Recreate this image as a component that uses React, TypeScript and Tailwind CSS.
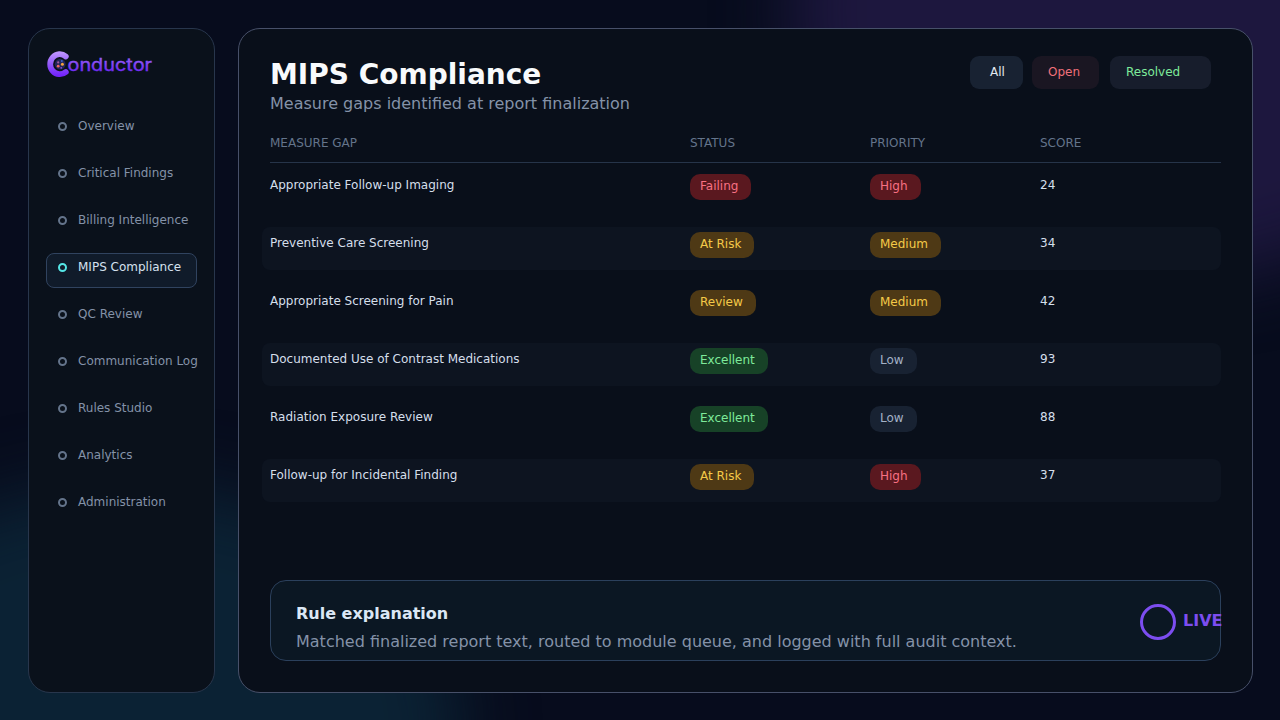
import clsx from "clsx";

interface NavItemProps {
  label: string;
  active?: boolean;
}

const navItems = [
  "Overview",
  "Critical Findings",
  "Billing Intelligence",
  "MIPS Compliance",
  "QC Review",
  "Communication Log",
  "Rules Studio",
  "Analytics",
  "Administration",
];

const rows = [
  { gap: "Appropriate Follow-up Imaging", status: "Failing", priority: "High", score: 24 },
  { gap: "Preventive Care Screening", status: "At Risk", priority: "Medium", score: 34 },
  { gap: "Appropriate Screening for Pain", status: "Review", priority: "Medium", score: 42 },
  { gap: "Documented Use of Contrast Medications", status: "Excellent", priority: "Low", score: 93 },
  { gap: "Radiation Exposure Review", status: "Excellent", priority: "Low", score: 88 },
  { gap: "Follow-up for Incidental Finding", status: "At Risk", priority: "High", score: 37 },
];

const badgeStyles: Record<string, string> = {
  Failing: "w-[61px] bg-[#5a181f] text-[#f87183]",
  High: "w-[51px] bg-[#5a181f] text-[#f87183]",
  "At Risk": "w-[64px] bg-[#4e3915] text-[#f5ca48]",
  Review: "w-[66px] bg-[#4e3915] text-[#f5ca48]",
  Medium: "w-[71px] bg-[#4e3915] text-[#f5ca48]",
  Excellent: "w-[78px] bg-[#174227] text-[#7eea9a]",
  Low: "w-[47px] bg-[#182232] text-[#a3b1c6]",
};

const Logo = () => (
  <svg width="106" height="28" viewBox="0 0 106 28" className="block">
    <defs>
      <linearGradient id="brand" x1="0" y1="0" x2="0" y2="28" gradientUnits="userSpaceOnUse">
        <stop offset="0.1" stopColor="#bd92ff" />
        <stop offset="0.5" stopColor="#9259f8" />
        <stop offset="0.9" stopColor="#7424fb" />
      </linearGradient>
      <linearGradient id="word" x1="0" y1="7" x2="0" y2="21" gradientUnits="userSpaceOnUse">
        <stop offset="0" stopColor="#9a62f8" />
        <stop offset="1" stopColor="#6f2cf0" />
      </linearGradient>
    </defs>
    <path
      d="M18.8 6.4A9.6 10 0 1 0 18.8 22"
      fill="none"
      stroke="url(#brand)"
      strokeWidth="5.8"
      strokeLinecap="round"
    />
    <circle cx="13.2" cy="14.2" r="5.4" fill="#22265a" />
    <circle cx="11.2" cy="12.4" r="1.1" fill="#a25a9a" />
    <circle cx="14.8" cy="11" r="1" fill="#3f62c8" />
    <circle cx="15.4" cy="14.3" r="1.5" fill="#f7a43c" />
    <circle cx="11.2" cy="16.2" r="1.4" fill="#f0655f" />
    <circle cx="14.2" cy="17.8" r="0.9" fill="#8c4ad6" />
    <text
      x="20.5"
      y="20.6"
      textLength="84.5"
      lengthAdjust="spacingAndGlyphs"
      fontFamily="Inter, sans-serif"
      fontSize="17.5"
      fill="url(#word)"
      stroke="url(#word)"
      strokeWidth="0.35"
    >
      onductor
    </text>
  </svg>
);

const NavItem = ({ label, active }: NavItemProps) => (
  <div
    className={clsx(
      "flex h-[35px] w-[151px] items-start gap-[11px] rounded-lg border pt-[5px] pl-[11px] text-xs whitespace-nowrap",
      active ? "border-[#30435f] bg-[#101b2a] text-[#d5e1ef]" : "border-transparent text-[#8492a8]"
    )}
  >
    <span
      className={clsx(
        "mt-[4px] size-[9px] shrink-0 rounded-full border-2",
        active ? "border-[#55e6e6]" : "border-[#64748b]"
      )}
    />
    <span className="leading-4">{label}</span>
  </div>
);

const Badge = ({ label }: { label: string }) => (
  <span className={clsx("block h-[26px] rounded-[10px] pl-[10px] leading-6 whitespace-nowrap", badgeStyles[label])}>
    {label}
  </span>
);

const App = () => {
  return (
    <div className="relative flex h-[720px] w-[1280px] gap-[23px] overflow-hidden bg-[#070c1d] p-7 font-['DejaVu_Sans',sans-serif]">
      {/* background glows */}
      <div className="absolute top-[-260px] left-[790px] h-[540px] w-[720px] rounded-[50%] bg-[#1d173e] blur-[35px]" />
      <div className="absolute top-[486px] left-[-200px] h-[480px] w-[660px] rounded-[50%] bg-[#0b2234] blur-[35px]" />

      <aside className="relative h-[665px] w-[187px] shrink-0 rounded-[22px] border border-[#28364c] bg-[#0a111b] pt-[21px] pl-[17px]">
        <div className="pl-px">
          <Logo />
        </div>
        <nav className="mt-[34px] flex flex-col gap-3">
          {navItems.map((item) => (
            <NavItem key={item} label={item} active={item === "MIPS Compliance"} />
          ))}
        </nav>
      </aside>

      <main className="relative h-[665px] w-[1015px] shrink-0 rounded-[22px] border border-[#475069] bg-[#090f1a] px-[31px] pt-[27px]">
        <header className="flex h-[72px] justify-between">
          <div>
            <h1 className="pt-px text-[28px] leading-[36px] font-bold whitespace-nowrap text-[#f8fafc]">
              MIPS Compliance
            </h1>
            <p className="text-base leading-[22px] whitespace-nowrap text-[#8492a8]">
              Measure gaps identified at report finalization
            </p>
          </div>
          <div className="mr-[10px] flex text-xs leading-8">
            <button className="flex h-[33px] w-[53px] rounded-[9px] bg-[#182232] pl-5 text-[#e2e8f0]">All</button>
            <button className="ml-[9px] flex h-[33px] w-[67px] rounded-[9px] bg-[#1a1622] pl-4 text-[#f0707a]">
              Open
            </button>
            <button className="ml-[11px] flex h-[33px] w-[101px] rounded-[9px] bg-[#171d2c] pl-4 text-[#7eea9a]">
              Resolved
            </button>
          </div>
        </header>

        <div className="grid h-[35px] grid-cols-[420px_180px_170px_1fr] border-b border-[#263449] pt-[7px] text-xs leading-4 text-[#64748b]">
          <span>MEASURE GAP</span>
          <span>STATUS</span>
          <span>PRIORITY</span>
          <span>SCORE</span>
        </div>

        <div className="mt-[6px] -ml-2 flex flex-col gap-[15px]">
          {rows.map((row, index) => (
            <div
              key={row.gap}
              className={clsx(
                "grid h-[43px] grid-cols-[420px_180px_170px_1fr] rounded-lg pt-[5px] pl-2 text-xs text-[#d5dfeb]",
                index % 2 === 1 && "bg-[#0d1420]"
              )}
            >
              <span className="pt-[3px] leading-4">{row.gap}</span>
              <Badge label={row.status} />
              <Badge label={row.priority} />
              <span className="pt-[3px] leading-4">{row.score}</span>
            </div>
          ))}
        </div>

        <section className="mt-[78px] flex h-[81px] justify-between rounded-2xl border border-[#2b405c] bg-[#0b1723] pl-[25px]">
          <div className="pt-[22px] whitespace-nowrap">
            <h2 className="text-base leading-[22px] font-bold text-[#dbe7f5]">Rule explanation</h2>
            <p className="mt-[6px] text-base leading-[22px] text-[#8492a8]">
              Matched finalized report text, routed to module queue, and logged with full audit context.
            </p>
          </div>
          <div className="-mr-[3px] flex gap-[7px] pt-[23px]">
            <span className="size-9 rounded-full border-[3px] border-[#7c4df0]" />
            <span className="w-10 pt-[6px] text-base leading-[22px] font-bold text-[#7c4df0]">LIVE</span>
          </div>
        </section>
      </main>
    </div>
  );
};

export default App;
